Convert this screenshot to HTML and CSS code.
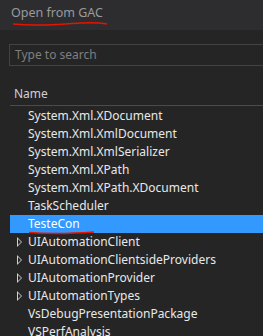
FILE: index.html
```html
<!DOCTYPE html>
<html lang="en">
<head>
    <meta charset="UTF-8">
    <title>Open from GAC</title>
    <link rel="stylesheet" href="styles.css">
</head>
<body>
    <div class="titlebar">
        <span class="title">Open from GAC</span>
        <svg class="mark mark-title" width="100" height="6" viewBox="0 0 100 6">
            <path d="M1 3 C 20 5, 40 4, 60 2.5 S 90 2, 95 3" stroke="#e51400" stroke-width="1.6" fill="none"/>
        </svg>
    </div>
    <div class="panel">
        <div class="search">Type to search</div>
        <div class="header">Name</div>
        <ul class="list">
            <li>System.Xml.XDocument</li>
            <li>System.Xml.XmlDocument</li>
            <li>System.Xml.XmlSerializer</li>
            <li>System.Xml.XPath</li>
            <li>System.Xml.XPath.XDocument</li>
            <li>TaskScheduler</li>
            <li class="selected">TesteCon
                <svg class="mark mark-item" width="70" height="6" viewBox="0 0 70 6">
                    <path d="M1 2.5 C 20 4, 45 3.5, 66 2" stroke="#e51400" stroke-width="1.6" fill="none"/>
                </svg>
            </li>
            <li class="group">UIAutomationClient</li>
            <li class="group">UIAutomationClientsideProviders</li>
            <li class="group">UIAutomationProvider</li>
            <li class="group">UIAutomationTypes</li>
            <li>VsDebugPresentationPackage</li>
            <li>VSPerfAnalysis</li>
        </ul>
    </div>
</body>
</html>
```

FILE: styles.css
```css
body {
    margin: 0;
    background-color: #252526;
    font-family: "Noto Sans", "Open Sans", sans-serif;
    overflow: hidden;
}
.titlebar {
    position: relative;
    height: 30px;
    background-color: #2d2d30;
    padding-left: 11px;
    box-sizing: border-box;
}
.title {
    display: inline-block;
    color: #9a9a9a;
    font-size: 12.5px;
    line-height: 26px;
}
.mark {
    position: absolute;
}
.mark-title {
    left: 12px;
    top: 21px;
}
.panel {
    padding-top: 14px;
    padding-left: 10px;
    overflow: hidden;
}
.search {
    height: 22px;
    box-sizing: border-box;
    border: 1px solid #434346;
    border-right: none;
    color: #7f7f7f;
    font-size: 12px;
    line-height: 20px;
    padding-left: 5px;
    margin-left: -1px;
}
.header {
    margin-top: 20px;
    height: 19px;
    border-bottom: 1px solid #4a4a4f;
    color: #d0d0d0;
    font-size: 12px;
    line-height: 16px;
    padding-left: 4px;
}
.list {
    list-style: none;
    margin: 1px 0 0 0;
    padding: 0;
}
.list li {
    position: relative;
    height: 18px;
    line-height: 18px;
    padding-left: 18px;
    color: #e8e8e8;
    font-size: 12px;
    white-space: nowrap;
}
.list li.selected {
    background-color: #3399ff;
    color: #ffffff;
}
.mark-item {
    left: 18px;
    top: 15px;
}
.list li.group::before {
    content: "";
    position: absolute;
    left: 7px;
    top: 4px;
    width: 0;
    height: 0;
    border-top: 5px solid transparent;
    border-bottom: 5px solid transparent;
    border-left: 5px solid #d0d0d0;
}
.list li.group::after {
    content: "";
    position: absolute;
    left: 8px;
    top: 6px;
    width: 0;
    height: 0;
    border-top: 3px solid transparent;
    border-bottom: 3px solid transparent;
    border-left: 3px solid #252526;
}
```
